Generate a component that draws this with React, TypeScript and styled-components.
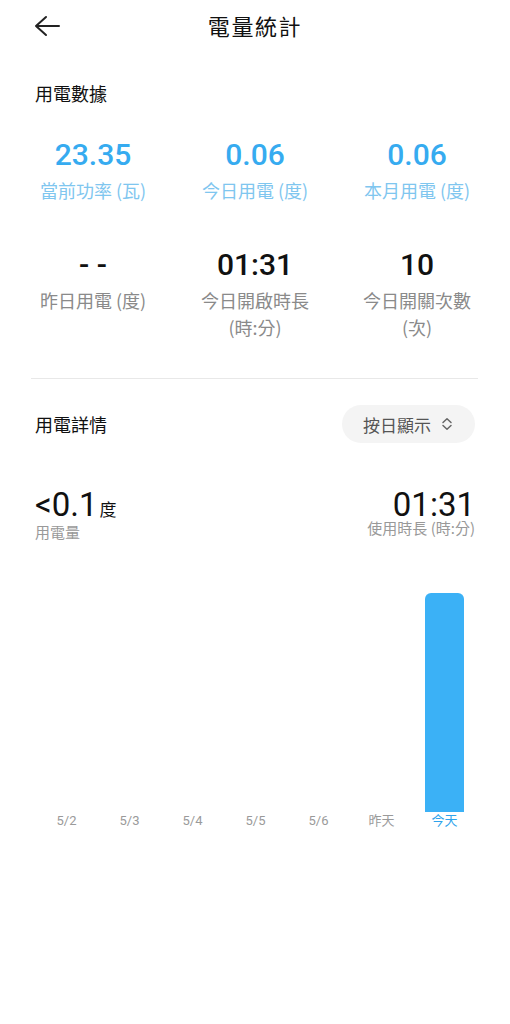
import styled, { createGlobalStyle } from "styled-components";

const GlobalStyle = createGlobalStyle`
  html, body {
    margin: 0;
    padding: 0;
    background: #fff;
  }
  body {
    font-family: Roboto, "Noto Sans CJK TC", sans-serif;
  }
`;

const summary = [
  { value: "23.35", label: "當前功率 (瓦)" },
  { value: "0.06", label: "今日用電 (度)" },
  { value: "0.06", label: "本月用電 (度)" },
];

const daily = [
  { value: "- -", label: "昨日用電 (度)" },
  { value: "01:31", label: "今日開啟時長\n(時:分)" },
  { value: "10", label: "今日開關次數\n(次)" },
];

const days = [
  { label: "5/2", level: 0 },
  { label: "5/3", level: 0 },
  { label: "5/4", level: 0 },
  { label: "5/5", level: 0 },
  { label: "5/6", level: 0 },
  { label: "昨天", level: 0 },
  { label: "今天", level: 1, active: true },
];

export default function App() {
  return (
    <Page>
      <GlobalStyle />
      <Header>
        <BackButton aria-label="back">
          <svg width="26" height="22" viewBox="0 0 26 22" fill="none">
            <path
              d="M12 2 L2 11 L12 20 M2 11 H25"
              stroke="#222"
              strokeWidth="2"
              strokeLinecap="round"
              strokeLinejoin="round"
            />
          </svg>
        </BackButton>
        <Title>電量統計</Title>
      </Header>

      <SectionTitle>用電數據</SectionTitle>

      <StatGrid>
        {summary.map((s) => (
          <Stat key={s.label} $top={31}>
            <StatValue $blue>{s.value}</StatValue>
            <StatLabel $blue>{s.label}</StatLabel>
          </Stat>
        ))}
      </StatGrid>
      <StatGrid>
        {daily.map((s) => (
          <Stat key={s.label} $top={43}>
            <StatValue>{s.value}</StatValue>
            <StatLabel>{s.label}</StatLabel>
          </Stat>
        ))}
      </StatGrid>

      <Divider />

      <DetailHeader>
        <SectionTitle as="div">用電詳情</SectionTitle>
        <ModeButton>
          按日顯示
          <svg width="14" height="14" viewBox="0 0 14 14" fill="none">
            <path
              d="M3 5.5 L7 1.8 L11 5.5 M3 8.5 L7 12.2 L11 8.5"
              stroke="#666"
              strokeWidth="1.5"
              strokeLinecap="round"
              strokeLinejoin="round"
            />
          </svg>
        </ModeButton>
      </DetailHeader>

      <Totals>
        <Total>
          <BigNumber>
            &lt;0.1<Unit>度</Unit>
          </BigNumber>
          <TotalLabel>用電量</TotalLabel>
        </Total>
        <Total $right>
          <BigNumber>01:31</BigNumber>
          <TotalLabel>使用時長 (時:分)</TotalLabel>
        </Total>
      </Totals>

      <Chart>
        {days.map((d) => (
          <Column key={d.label}>
            <BarArea>
              {d.level > 0 && <Bar style={{ height: `${d.level * 100}%` }} />}
            </BarArea>
            <DayLabel $active={d.active}>{d.label}</DayLabel>
          </Column>
        ))}
      </Chart>
    </Page>
  );
}

const Page = styled.div`
  width: 510px;
  min-height: 1024px;
  background: #fff;
  color: #111;
  font-family: Roboto, "Noto Sans CJK TC", sans-serif;
`;

const Header = styled.div`
  position: relative;
  height: 50px;
  display: flex;
  align-items: center;
  justify-content: center;
`;

const BackButton = styled.button`
  position: absolute;
  left: 34px;
  top: 15px;
  padding: 0;
  border: none;
  background: none;
  display: flex;
`;

const Title = styled.h1`
  margin: 0;
  font-family: "Noto Sans CJK TC", sans-serif;
  font-size: 22px;
  font-weight: 400;
  letter-spacing: 1.6px;
  color: #111;
`;

const SectionTitle = styled.h2`
  margin: 30px 0 0 35px;
  font-family: "Noto Sans CJK TC", sans-serif;
  font-size: 18px;
  font-weight: 400;
  line-height: 26px;
  color: #111;
`;

const StatGrid = styled.div`
  display: grid;
  grid-template-columns: repeat(3, 162px);
  padding: 0 12px;
`;

const Stat = styled.div<{ $top: number }>`
  display: flex;
  flex-direction: column;
  align-items: center;
  padding-top: ${(p) => p.$top}px;
`;

const StatValue = styled.div<{ $blue?: boolean }>`
  font-family: Roboto, sans-serif;
  font-size: 30px;
  font-weight: 500;
  line-height: 36px;
  color: ${(p) => (p.$blue ? "#36abf0" : "#111")};
`;

const StatLabel = styled.div<{ $blue?: boolean }>`
  margin-top: 4px;
  font-family: "Noto Sans CJK TC", sans-serif;
  font-size: 18px;
  line-height: 27px;
  text-align: center;
  white-space: pre-line;
  color: ${(p) => (p.$blue ? "#7fc6ef" : "#8a8a8a")};
`;

const Divider = styled.hr`
  margin: 37px 32px 0 31px;
  border: none;
  border-top: 1px solid #e8e8e8;
`;

const DetailHeader = styled.div`
  display: flex;
  align-items: center;
  justify-content: space-between;
  padding-right: 35px;
  margin-top: 26px;

  & > div {
    margin-top: 0;
  }
`;

const ModeButton = styled.button`
  display: flex;
  align-items: center;
  gap: 9px;
  height: 38px;
  padding: 0 21px 0 21px;
  border: none;
  border-radius: 19px;
  background: #f4f4f4;
  font-family: "Noto Sans CJK TC", sans-serif;
  font-size: 17px;
  color: #555;
`;

const Totals = styled.div`
  display: flex;
  justify-content: space-between;
  padding: 48px 35px 0;
`;

const Total = styled.div<{ $right?: boolean }>`
  display: flex;
  flex-direction: column;
  align-items: ${(p) => (p.$right ? "flex-end" : "flex-start")};
`;

const BigNumber = styled.div`
  font-family: Roboto, sans-serif;
  font-size: 33px;
  font-weight: 400;
  line-height: 28px;
  color: #111;
`;

const Unit = styled.span`
  margin-left: 2px;
  font-family: "Noto Sans CJK TC", sans-serif;
  font-size: 17px;
`;

const TotalLabel = styled.div`
  font-family: "Noto Sans CJK TC", sans-serif;
  font-size: 15px;
  line-height: 18px;
  color: #999;
`;

const Chart = styled.div`
  display: grid;
  grid-template-columns: repeat(7, 63px);
  padding: 52px 0 0 35px;
`;

const Column = styled.div`
  display: flex;
  flex-direction: column;
  align-items: center;
`;

const BarArea = styled.div`
  height: 219px;
  width: 39px;
  display: flex;
  align-items: flex-end;
`;

const Bar = styled.div`
  width: 100%;
  background: #3bb1f6;
  border-radius: 6px 6px 0 0;
`;

const DayLabel = styled.div<{ $active?: boolean }>`
  font-family: Roboto, "Noto Sans CJK TC", sans-serif;
  font-size: 13px;
  line-height: 18px;
  color: ${(p) => (p.$active ? "#2ea3ec" : "#9a9a9a")};
`;
